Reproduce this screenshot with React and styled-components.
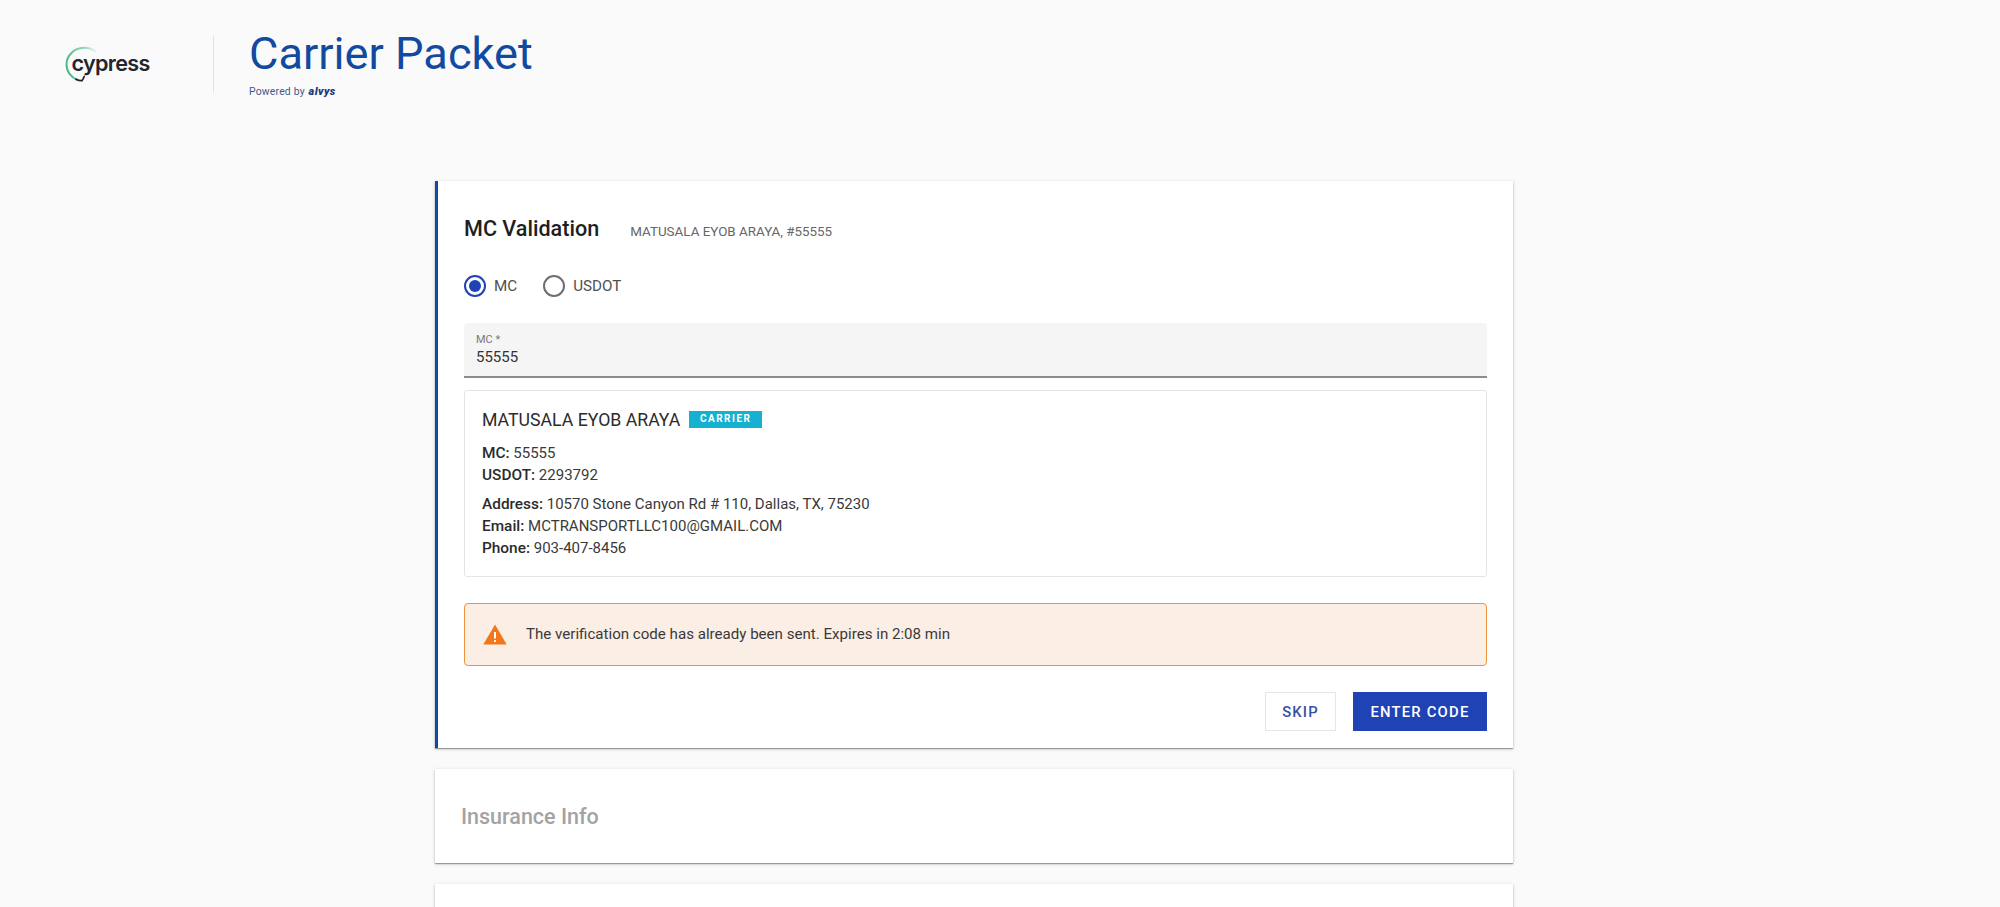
import React from "react";
import styled, { createGlobalStyle } from "styled-components";

const Global = createGlobalStyle`
  html, body { margin: 0; padding: 0; background: #fafafa; overflow: hidden; }
  body { font-family: Roboto, "Liberation Sans", sans-serif; color: #2b2b2b; }
  * { box-sizing: border-box; }
`;

const Page = styled.div`
  height: 907px;
  overflow: hidden;
`;
const Header = styled.header`
  display: flex;
  align-items: flex-start;
  height: 181px;
  padding: 24px 0 0 63px;
`;
const Logo = styled.div`
  position: relative;
  width: 86px;
  height: 42px;
  margin-top: 19px;
  flex: none;
`;
const LogoText = styled.span`
  position: absolute;
  left: 8.5px;
  top: 7px;
  font-family: Inter, sans-serif;
  font-size: 21.6px;
  font-weight: 600;
  letter-spacing: -0.7px;
  color: #23252e;
  line-height: 26px;
`;
const LogoArc = styled.svg`
  position: absolute;
  left: 0;
  top: 0;
`;
const Divider = styled.div`
  width: 1px;
  height: 57px;
  margin: 12px 35px 0 64px;
  background: #e2e2e2;
  flex: none;
`;
const TitleBlock = styled.div`
  display: flex;
  flex-direction: column;
`;
const Title = styled.h1`
  margin: 0;
  font-size: 45.2px;
  font-weight: 400;
  line-height: 60px;
  color: #124a9f;
`;
const Powered = styled.div`
  font-size: 10.4px;
  line-height: 12px;
  margin-top: 2px;
  color: #3f5a8c;
  letter-spacing: 0.2px;
`;
const Brand = styled.span`
  font-size: 11px;
  font-weight: 900;
  font-style: italic;
  letter-spacing: 0.4px;
  margin-left: 1px;
  color: #1f3a7a;
`;
const Main = styled.main`
  display: flex;
  flex-direction: column;
  gap: 21px;
  width: 1078px;
  margin-left: 435px;
`;
const Card = styled.section`
  background: #fff;
  height: ${(p) => p.$height}px;
  flex: none;
  border-left: ${(p) => (p.$active ? "3px solid #124a9f" : "none")};
  box-shadow: 0 1px 1px rgba(0, 0, 0, 0.32), 0 1px 4px rgba(0, 0, 0, 0.16);
`;
const ActiveBody = styled.div`
  display: flex;
  flex-direction: column;
  padding: 34px 26px 0 26px;
`;
const CardHead = styled.div`
  display: flex;
  align-items: baseline;
  gap: 31px;
`;
const CardTitle = styled.h2`
  margin: 0;
  font-size: 21.6px;
  line-height: 28px;
  font-weight: 500;
  color: #1f1f1f;
`;
const CardSub = styled.span`
  font-size: 13.4px;
  color: #666;
`;
const RadioRow = styled.div`
  display: flex;
  align-items: center;
  gap: 26px;
  margin-top: 31px;
  height: 24px;
`;
const RadioLabel = styled.label`
  display: flex;
  align-items: center;
  gap: 8px;
  font-size: 15.2px;
  color: #505050;
`;
const RadioMark = styled.span`
  width: 22px;
  height: 22px;
  border-radius: 50%;
  border: 2px solid ${(p) => (p.$on ? "#1f43b5" : "#6f6f6f")};
  display: flex;
  align-items: center;
  justify-content: center;
  &::after {
    content: "";
    display: ${(p) => (p.$on ? "block" : "none")};
    width: 12px;
    height: 12px;
    border-radius: 50%;
    background: #1f43b5;
  }
`;
const Field = styled.div`
  margin-top: 25px;
  height: 55px;
  background: #f5f5f5;
  border-bottom: 2px solid #8c8c8c;
  border-radius: 4px 4px 0 0;
  padding: 10px 12px 0;
`;
const FieldLabel = styled.div`
  font-size: 11px;
  line-height: 14px;
  color: #7a7a7a;
`;
const FieldValue = styled.div`
  font-size: 15px;
  line-height: 21px;
  color: #333;
`;
const InfoBox = styled.div`
  margin-top: 12px;
  height: 187px;
  border: 1px solid #e4e4e4;
  border-radius: 3px;
  padding: 16px 17px 0;
`;
const NameRow = styled.div`
  display: flex;
  align-items: center;
  gap: 9px;
  height: 24px;
`;
const Name = styled.span`
  margin-top: 2px;
  font-size: 17.7px;
  font-weight: 400;
  color: #2b2b2b;
`;
const Badge = styled.span`
  width: 73px;
  height: 17px;
  background: #14b1d0;
  color: #fff;
  font-size: 10px;
  font-weight: 700;
  letter-spacing: 1.5px;
  line-height: 15px;
  text-align: center;
`;
const InfoGroup = styled.div`
  margin-top: ${(p) => p.$gap}px;
  font-size: 15px;
  line-height: 21.7px;
  color: #3a3a3a;
`;
const Line = styled.div``;
const Key = styled.span`
  font-size: 15.4px;
  font-weight: 500;
  color: #2b2b2b;
`;
const Alert = styled.div`
  margin-top: 26px;
  height: 63px;
  display: flex;
  align-items: center;
  gap: 19px;
  padding: 0 18px;
  background: #fbeee5;
  border: 1.5px solid #ee9440;
  border-radius: 4px;
  font-size: 15.1px;
  color: #3a3a3a;
`;
const AlertText = styled.span`
  margin-bottom: 2px;
`;
const Actions = styled.div`
  display: flex;
  justify-content: flex-end;
  gap: 17px;
  margin-top: 26px;
`;
const Button = styled.button`
  height: 39px;
  width: ${(p) => p.$width}px;
  padding: 0;
  font-family: inherit;
  font-size: 14.8px;
  font-weight: 500;
  letter-spacing: 1.2px;
  border: 1px solid ${(p) => (p.$primary ? "#1f43b5" : "#e6e6e6")};
  background: ${(p) => (p.$primary ? "#1f43b5" : "#fff")};
  color: ${(p) => (p.$primary ? "#fff" : "#3a4ea3")};
`;
const CollapsedBody = styled.div`
  display: flex;
  align-items: center;
  height: 94px;
  padding-left: 26px;
  font-size: 21.5px;
  font-weight: 500;
  color: #a3a3a3;
`;

export default function App() {
  return (
    <Page>
      <Global />
      <Header>
        <Logo>
          <LogoArc width="40" height="42" viewBox="0 0 40 42" fill="none">
            <defs>
              <linearGradient id="arc" x1="0" y1="0.2" x2="1" y2="0">
                <stop offset="0" stopColor="#4dbb8a" />
                <stop offset="0.65" stopColor="#8fdcbc" />
                <stop offset="1" stopColor="#e6f7f0" />
              </linearGradient>
            </defs>
            <path d="M32.5 8.5C29.5 6 25 4.5 20.5 4.8C11 5.2 3.5 12.5 3.5 21.5C3.5 28.5 8 34.5 14.5 37" stroke="url(#arc)" strokeWidth="2" strokeLinecap="round" />
            <path d="M13 36.2C15 37.2 17 38 19 37.6C20 36.5 20.6 35 21.2 33.5" stroke="#23252e" strokeWidth="1.8" strokeLinecap="round" />
          </LogoArc>
          <LogoText>cypress</LogoText>
        </Logo>
        <Divider />
        <TitleBlock>
          <Title>Carrier Packet</Title>
          <Powered>
            Powered by <Brand>alvys</Brand>
          </Powered>
        </TitleBlock>
      </Header>
      <Main>
        <Card $active $height={567}>
          <ActiveBody>
            <CardHead>
              <CardTitle>MC Validation</CardTitle>
              <CardSub>MATUSALA EYOB ARAYA, #55555</CardSub>
            </CardHead>
            <RadioRow>
              <RadioLabel>
                <RadioMark $on />
                MC
              </RadioLabel>
              <RadioLabel>
                <RadioMark />
                USDOT
              </RadioLabel>
            </RadioRow>
            <Field>
              <FieldLabel>MC *</FieldLabel>
              <FieldValue>55555</FieldValue>
            </Field>
            <InfoBox>
              <NameRow>
                <Name>MATUSALA EYOB ARAYA</Name>
                <Badge>CARRIER</Badge>
              </NameRow>
              <InfoGroup $gap={12}>
                <Line><Key>MC:</Key> 55555</Line>
                <Line><Key>USDOT:</Key> 2293792</Line>
              </InfoGroup>
              <InfoGroup $gap={8}>
                <Line><Key>Address:</Key> 10570 Stone Canyon Rd # 110, Dallas, TX, 75230</Line>
                <Line><Key>Email:</Key> MCTRANSPORTLLC100@GMAIL.COM</Line>
                <Line><Key>Phone:</Key> 903-407-8456</Line>
              </InfoGroup>
            </InfoBox>
            <Alert>
              <svg width="24" height="21" viewBox="0 0 24 21">
                <path d="M12 0.5L23.7 20.5H0.3Z" fill="#f5761a" />
                <rect x="11" y="8" width="2" height="6.5" fill="#fff" />
                <rect x="11" y="16" width="2" height="2" fill="#fff" />
              </svg>
              <AlertText>The verification code has already been sent. Expires in 2:08 min</AlertText>
            </Alert>
            <Actions>
              <Button $width={71}>SKIP</Button>
              <Button $primary $width={134}>ENTER CODE</Button>
            </Actions>
          </ActiveBody>
        </Card>
        <Card $height={94}>
          <CollapsedBody>Insurance Info</CollapsedBody>
        </Card>
        <Card $height={94} />
      </Main>
    </Page>
  );
}
